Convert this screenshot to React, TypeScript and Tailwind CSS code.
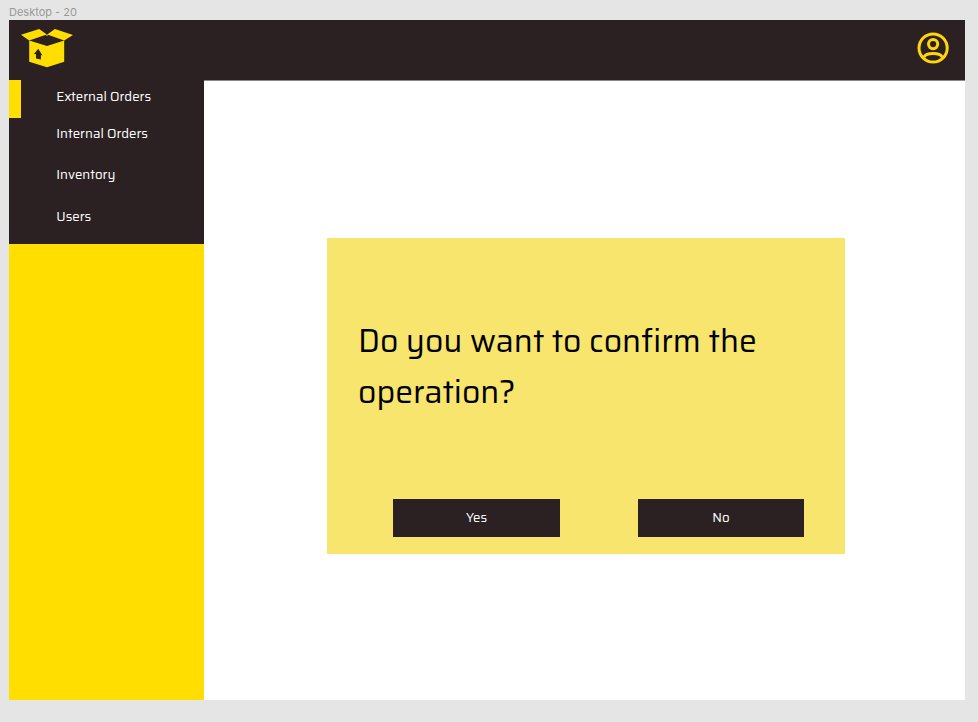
import React from "react";

function BoxLogo() {
  return (
    <svg width="52" height="40" viewBox="21 28 52 40" className="block" fill="#ffde00">
      <path d="M21 34.8L39.2 29L46.8 34.6L29.2 40.6Z" />
      <path d="M73 34.9L54.9 29L47.2 34.6L64.2 40.6Z" />
      <path d="M45.6 34.8H48.4L47 35.9Z" />
      <path d="M29.2 40.4L47 46L64.2 40.4V61.8L47 67.2L29.2 61.8Z" />
      <path fill="#2b2122" d="M38.2 48.8L42.5 55.4L40.9 55.1V59.6L36 58.6V54L33.8 54.2Z" />
    </svg>
  );
}

function AccountIcon() {
  return (
    <svg width="32" height="32" viewBox="917 32 32 32" className="block" fill="none" stroke="#ffd60a" strokeWidth="3">
      <circle cx="933.1" cy="48" r="14.1" />
      <circle cx="933.1" cy="44.1" r="4.6" />
      <path d="M923.8 57.2C926.5 52.4 939.7 52.4 942.4 57.2" />
    </svg>
  );
}

const items = [
  { label: "External Orders", cls: "h-[34px]" },
  { label: "Internal Orders", cls: "h-[39px]" },
  { label: "Inventory", cls: "h-[44px]" },
  { label: "Users", cls: "h-[39px]" },
];

export default function App() {
  return (
    <div className="h-[722px] w-[978px] overflow-hidden bg-[#e5e5e5] pl-[9px] font-['Saira','Roboto',sans-serif]">
      <div className="h-[20px] pt-[5px] font-['Inter',sans-serif] text-[11px] leading-[14px] text-[#999999]">
        Desktop - 20
      </div>
      <div className="flex h-[680px] w-[956px] flex-col bg-white">
        <header className="flex h-[60px] shrink-0 items-start justify-between bg-[#2b2122] pt-[8px] pr-[16px] pl-[12px]">
          <BoxLogo />
          <div className="pt-[4px]">
            <AccountIcon />
          </div>
        </header>
        <div className="flex flex-1">
          <aside className="w-[195px] bg-[#ffde00]">
            <div className="flex h-[164px] bg-[#2b2122]">
              <div className="h-[38px] w-[12px] bg-[#ffde00]" />
              <nav className="pl-[35.3px] text-[13.25px] text-white">
                {items.map((i) => (
                  <div key={i.label} className={`flex items-center whitespace-nowrap ${i.cls}`}>
                    {i.label}
                  </div>
                ))}
              </nav>
            </div>
          </aside>
          <main className="flex-1 border-t border-[#8c8788] pt-[157px] pl-[123px]">
            <section className="h-[316px] w-[518px] bg-[#f8e56d] pt-[78px]">
              <h1 className="pl-[31px] text-[31.9px] leading-[50.5px] text-black">
                <div className="whitespace-nowrap">Do you want to confirm the</div>
                <div>operation?</div>
              </h1>
              <div className="flex gap-[78px] pt-[82px] pl-[66px] text-[13.25px] text-white">
                <button className="h-[38px] w-[167px] bg-[#2b2122]">Yes</button>
                <button className="h-[38px] w-[166px] bg-[#2b2122]">No</button>
              </div>
            </section>
          </main>
        </div>
      </div>
    </div>
  );
}
